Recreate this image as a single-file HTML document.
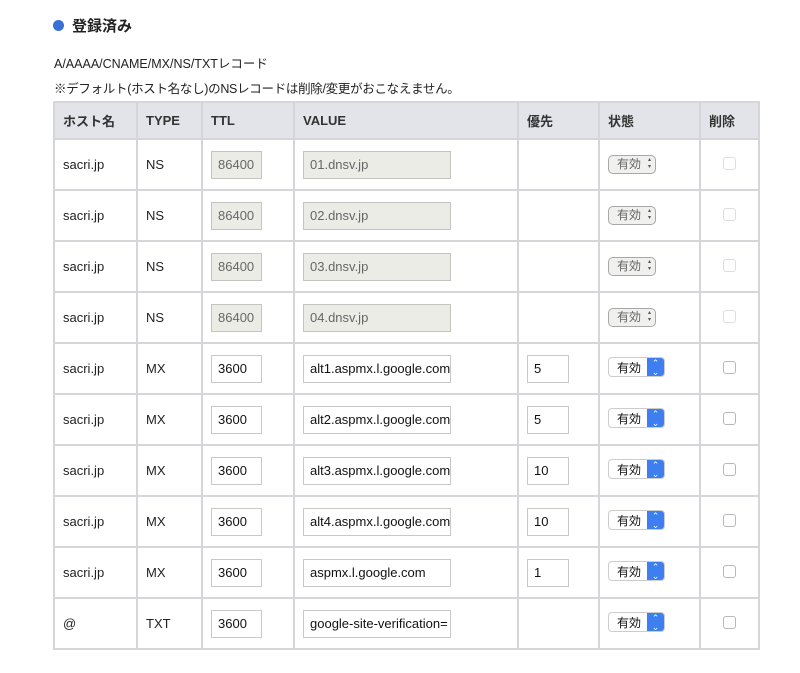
<!DOCTYPE html>
<html><head><meta charset="utf-8"><style>
body{margin:0;background:#fff;font-family:"Liberation Sans","Noto Sans CJK JP",sans-serif;color:#222;width:800px;height:673px;position:relative;overflow:hidden}
.dot{position:absolute;left:53px;top:20px;width:11px;height:11px;border-radius:50%;background:#3a6fd8}
.h{position:absolute;left:72px;top:15px;font-size:15px;font-weight:bold}
.t1{position:absolute;left:54px;top:53px;font-size:12.5px}
.t2{position:absolute;left:54px;top:78px;font-size:12.5px;letter-spacing:-0.3px}
table{position:absolute;left:53px;top:101px;border-collapse:collapse;table-layout:fixed;font-size:13px}
td,th{border:2px solid #d6d6da;padding:0 0 0 8px;text-align:left}
th{background:#e2e4e9;height:35px;font-weight:bold;font-size:13px;color:#333}
td{height:49px}
.in{display:inline-block;box-sizing:border-box;height:28px;border:1px solid #c8c8c8;padding:0 6px;line-height:26px;font-size:13px;vertical-align:middle;background:#fff;color:#111;white-space:nowrap;overflow:hidden}
.dis{background:#ecece7;color:#666;border-color:#c4c4c0}
.s1{display:inline-block;box-sizing:border-box;height:19px;width:48px;border:1px solid #a8a8a8;border-radius:5px;background:#f0f0ee;color:#666;font-size:12px;line-height:17px;padding-left:8px;position:relative}
.s1:after{content:"\25B4\A\25BE";white-space:pre;position:absolute;right:4px;top:1px;font-size:6px;line-height:7px;color:#555}
.s2{display:inline-block;box-sizing:border-box;height:20px;width:57px;border:1px solid #ccc;border-radius:4px;background:#fff;color:#111;font-size:12px;line-height:20px;padding-left:8px;position:relative;overflow:hidden}
.s2 b{position:absolute;right:0;top:0;width:17px;height:20px;background:#3d7ff0;color:#fff;font-size:9px;line-height:9px;text-align:center;font-weight:normal;padding-top:1px}
.cb{display:inline-block;width:11px;height:11px;border:1px solid #b8b8b8;border-radius:3px;margin-left:14px;background:#fff}
.cb.d{border-color:#ddd}
</style></head><body>
<div class="dot"></div><div class="h">登録済み</div>
<div class="t1">A/AAAA/CNAME/MX/NS/TXTレコード</div>
<div class="t2">※デフォルト(ホスト名なし)のNSレコードは削除/変更がおこなえません。</div>
<table>
<colgroup><col style="width:83px"><col style="width:65px"><col style="width:92px"><col style="width:224px"><col style="width:81px"><col style="width:101px"><col style="width:59px"></colgroup>
<tr><th>ホスト名</th><th>TYPE</th><th>TTL</th><th>VALUE</th><th>優先</th><th>状態</th><th>削除</th></tr>
<tr><td>sacri.jp</td><td>NS</td><td><span class="in dis" style="width:51px">86400</span></td><td><span class="in dis" style="width:148px">01.dnsv.jp</span></td><td></td><td><span class="s1">有効</span></td><td><span class="cb d"></span></td></tr>
<tr><td>sacri.jp</td><td>NS</td><td><span class="in dis" style="width:51px">86400</span></td><td><span class="in dis" style="width:148px">02.dnsv.jp</span></td><td></td><td><span class="s1">有効</span></td><td><span class="cb d"></span></td></tr>
<tr><td>sacri.jp</td><td>NS</td><td><span class="in dis" style="width:51px">86400</span></td><td><span class="in dis" style="width:148px">03.dnsv.jp</span></td><td></td><td><span class="s1">有効</span></td><td><span class="cb d"></span></td></tr>
<tr><td>sacri.jp</td><td>NS</td><td><span class="in dis" style="width:51px">86400</span></td><td><span class="in dis" style="width:148px">04.dnsv.jp</span></td><td></td><td><span class="s1">有効</span></td><td><span class="cb d"></span></td></tr>
<tr><td>sacri.jp</td><td>MX</td><td><span class="in" style="width:51px">3600</span></td><td><span class="in" style="width:148px">alt1.aspmx.l.google.com</span></td><td><span class="in" style="width:42px">5</span></td><td><span class="s2">有効<b>⌃<br>⌄</b></span></td><td><span class="cb"></span></td></tr>
<tr><td>sacri.jp</td><td>MX</td><td><span class="in" style="width:51px">3600</span></td><td><span class="in" style="width:148px">alt2.aspmx.l.google.com</span></td><td><span class="in" style="width:42px">5</span></td><td><span class="s2">有効<b>⌃<br>⌄</b></span></td><td><span class="cb"></span></td></tr>
<tr><td>sacri.jp</td><td>MX</td><td><span class="in" style="width:51px">3600</span></td><td><span class="in" style="width:148px">alt3.aspmx.l.google.com</span></td><td><span class="in" style="width:42px">10</span></td><td><span class="s2">有効<b>⌃<br>⌄</b></span></td><td><span class="cb"></span></td></tr>
<tr><td>sacri.jp</td><td>MX</td><td><span class="in" style="width:51px">3600</span></td><td><span class="in" style="width:148px">alt4.aspmx.l.google.com</span></td><td><span class="in" style="width:42px">10</span></td><td><span class="s2">有効<b>⌃<br>⌄</b></span></td><td><span class="cb"></span></td></tr>
<tr><td>sacri.jp</td><td>MX</td><td><span class="in" style="width:51px">3600</span></td><td><span class="in" style="width:148px">aspmx.l.google.com</span></td><td><span class="in" style="width:42px">1</span></td><td><span class="s2">有効<b>⌃<br>⌄</b></span></td><td><span class="cb"></span></td></tr>
<tr><td>@</td><td>TXT</td><td><span class="in" style="width:51px">3600</span></td><td><span class="in" style="width:148px">google-site-verification=</span></td><td></td><td><span class="s2">有効<b>⌃<br>⌄</b></span></td><td><span class="cb"></span></td></tr>
</table>
</body></html>
